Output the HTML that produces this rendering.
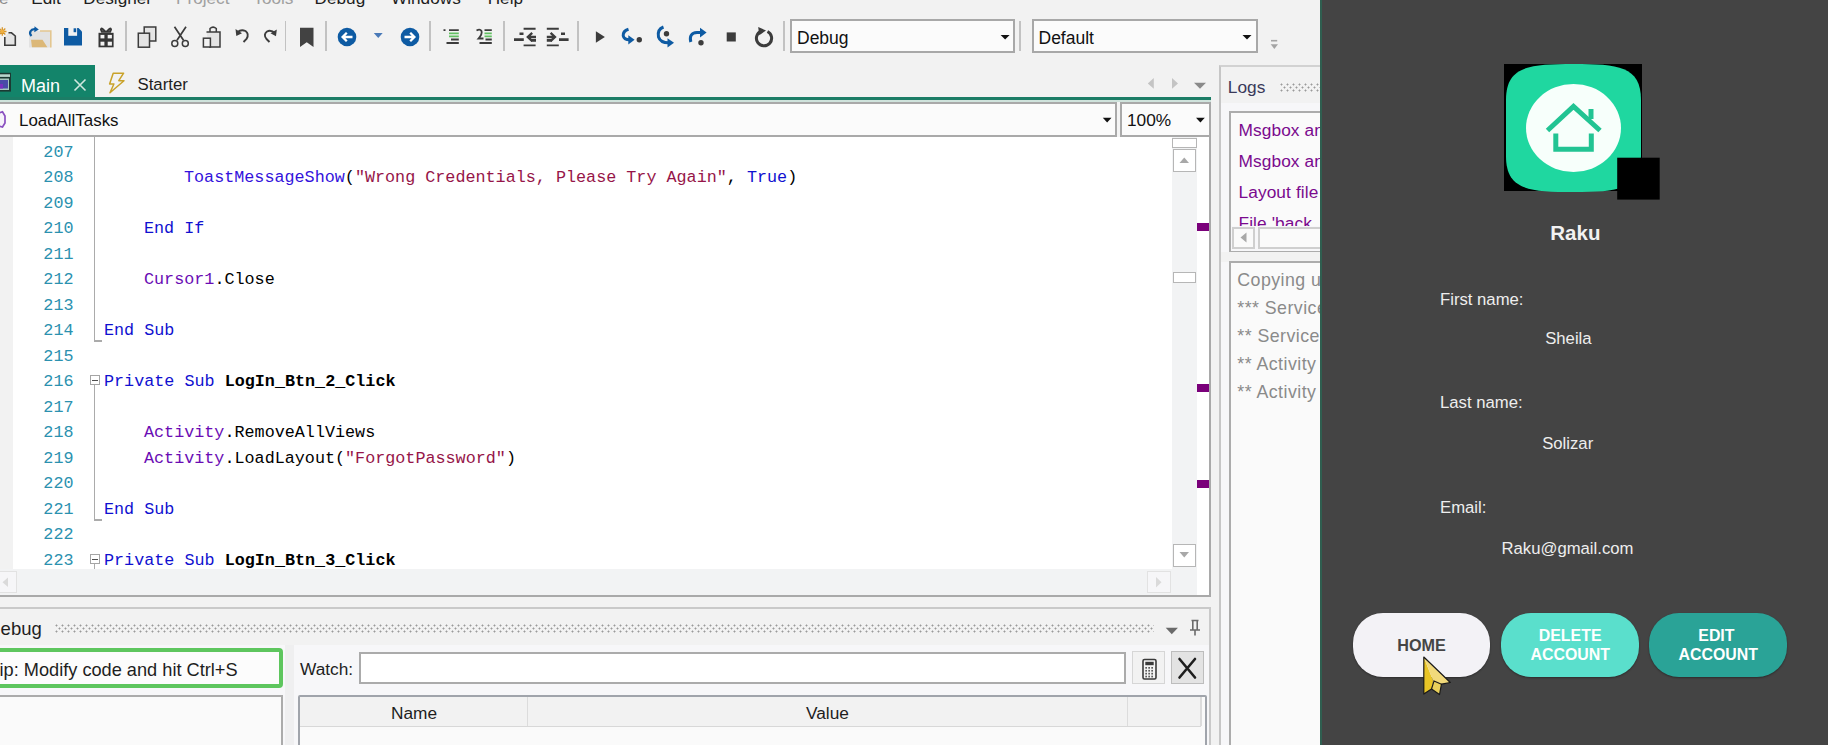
<!DOCTYPE html>
<html><head><meta charset="utf-8"><style>
html,body{margin:0;padding:0;}
body{width:1828px;height:745px;overflow:hidden;position:relative;background:#f2f2f2;font-family:"Liberation Sans", sans-serif;}
div{box-sizing:border-box;}
svg{position:absolute;left:0;top:0;overflow:visible}
</style></head><body>

<div style="position:absolute;left:-1.00px;top:-10.00px;font-family:'Liberation Sans', sans-serif;font-size:17.2px;line-height:1;white-space:pre;color:#8a8a8a;font-weight:normal;">e</div>
<div style="position:absolute;left:31.20px;top:-10.00px;font-family:'Liberation Sans', sans-serif;font-size:17.2px;line-height:1;white-space:pre;color:#1e1e1e;font-weight:normal;">Edit</div>
<div style="position:absolute;left:83.30px;top:-10.00px;font-family:'Liberation Sans', sans-serif;font-size:17.2px;line-height:1;white-space:pre;color:#1e1e1e;font-weight:normal;">Designer</div>
<div style="position:absolute;left:176.00px;top:-10.00px;font-family:'Liberation Sans', sans-serif;font-size:17.2px;line-height:1;white-space:pre;color:#a0a0a0;font-weight:normal;">Project</div>
<div style="position:absolute;left:253.30px;top:-10.00px;font-family:'Liberation Sans', sans-serif;font-size:17.2px;line-height:1;white-space:pre;color:#a0a0a0;font-weight:normal;">Tools</div>
<div style="position:absolute;left:314.60px;top:-10.00px;font-family:'Liberation Sans', sans-serif;font-size:17.2px;line-height:1;white-space:pre;color:#1e1e1e;font-weight:normal;">Debug</div>
<div style="position:absolute;left:391.00px;top:-10.00px;font-family:'Liberation Sans', sans-serif;font-size:17.2px;line-height:1;white-space:pre;color:#1e1e1e;font-weight:normal;">Windows</div>
<div style="position:absolute;left:487.70px;top:-10.00px;font-family:'Liberation Sans', sans-serif;font-size:17.2px;line-height:1;white-space:pre;color:#1e1e1e;font-weight:normal;">Help</div>
<div style="position:absolute;left:125.25px;top:21px;width:1.5px;height:30px;background:#c2c2c2"></div>
<div style="position:absolute;left:284.65px;top:21px;width:1.5px;height:30px;background:#c2c2c2"></div>
<div style="position:absolute;left:325.25px;top:21px;width:1.5px;height:30px;background:#c2c2c2"></div>
<div style="position:absolute;left:429.25px;top:21px;width:1.5px;height:30px;background:#c2c2c2"></div>
<div style="position:absolute;left:503.25px;top:21px;width:1.5px;height:30px;background:#c2c2c2"></div>
<div style="position:absolute;left:577.25px;top:21px;width:1.5px;height:30px;background:#c2c2c2"></div>
<div style="position:absolute;left:783.05px;top:21px;width:1.5px;height:30px;background:#c2c2c2"></div>
<div style="position:absolute;left:1019.25px;top:21px;width:1.5px;height:30px;background:#c2c2c2"></div>
<div style="position:absolute;left:790px;top:19px;width:225px;height:34px;background:#fbfbfb;border:2px solid #a8a8a8"></div>
<div style="position:absolute;left:797.00px;top:29.53px;font-family:'Liberation Sans', sans-serif;font-size:17.5px;line-height:1;white-space:pre;color:#111;font-weight:normal;">Debug</div>
<div style="position:absolute;left:1032px;top:19px;width:226px;height:34px;background:#fbfbfb;border:2px solid #a8a8a8"></div>
<div style="position:absolute;left:1038.50px;top:29.83px;font-family:'Liberation Sans', sans-serif;font-size:17.5px;line-height:1;white-space:pre;color:#111;font-weight:normal;">Default</div>
<div style="position:absolute;left:0px;top:65px;width:95px;height:33px;background:#13846a"></div>
<div style="position:absolute;left:0px;top:97px;width:1211px;height:3px;background:#1c7d66"></div>
<div style="position:absolute;left:0px;top:100px;width:1211px;height:1.5px;background:#cfe3dc"></div>
<div style="position:absolute;left:21.00px;top:76.55px;font-family:'Liberation Sans', sans-serif;font-size:18px;line-height:1;white-space:pre;color:#ffffff;font-weight:normal;">Main</div>
<div style="position:absolute;left:137.50px;top:77.14px;font-family:'Liberation Sans', sans-serif;font-size:16.8px;line-height:1;white-space:pre;color:#1e1e1e;font-weight:normal;">Starter</div>
<div style="position:absolute;left:-2px;top:101.5px;width:1119px;height:35px;background:#fbfbfb;border:2px solid #a9a9a9"></div>
<div style="position:absolute;left:1117px;top:101.5px;width:3px;height:35px;background:#f4f4f4"></div>
<div style="position:absolute;left:1120px;top:101.5px;width:91px;height:35px;background:#fbfbfb;border:2px solid #a9a9a9"></div>
<div style="position:absolute;left:19.00px;top:112.52px;font-family:'Liberation Sans', sans-serif;font-size:16.9px;line-height:1;white-space:pre;color:#111;font-weight:normal;">LoadAllTasks</div>
<div style="position:absolute;left:1127.00px;top:112.36px;font-family:'Liberation Sans', sans-serif;font-size:17.3px;line-height:1;white-space:pre;color:#111;font-weight:normal;">100%</div>
<svg width="1828" height="745" style="position:absolute;left:0;top:0"><path d="M4.8 37 V45.3 H15.3 V36 L11.5 32.8 H8.5" stroke="#3c3c3c" stroke-width="1.6" fill="#e4e4e4" stroke-linejoin="miter"/><g stroke="#d8962a" stroke-width="1.3"><path d="M2.3 27.3 V35.7 M-1.9 31.5 H6.5 M-0.7 28.5 L5.3 34.5 M5.3 28.5 L-0.7 34.5"/></g><circle cx="2.3" cy="31.5" r="1.8" fill="#f0b040"/><path d="M29 31 H50.8 V47.5 H29 Z" fill="#e2e2e2"/><path d="M40 31 H50.8 V47.5" stroke="#e3c690" stroke-width="1.6" fill="none"/><path d="M31 39.7 H42.5 L47.4 47.2 H32 Z" fill="#dcb878"/><path d="M31.5 36 C28.5 33 30.5 28.5 35.5 29.2" stroke="#0e5ba3" stroke-width="2.2" fill="none"/><path d="M34.5 26.3 L38.8 29.4 L34.3 32.2 Z" fill="#0e5ba3"/><path d="M64 27.9 H78.5 L82 31.4 V45.6 H64 Z" fill="#0e5ba3"/><rect x="68.3" y="27.9" width="8.8" height="7.9" fill="#f2f2f2"/><rect x="73.6" y="28.3" width="2.6" height="3.9" fill="#0e5ba3"/><rect x="98.5" y="32.8" width="15.1" height="14.5" fill="#363636"/><g fill="#f2f2f2"><rect x="100.5" y="34.9" width="3.9" height="3.5"/><rect x="107.7" y="34.9" width="4.2" height="3.5"/><rect x="100.5" y="41.7" width="3.9" height="3.9"/><rect x="107.7" y="41.7" width="4.2" height="3.9"/></g><path d="M106 32 L102.5 28.6 Q101 27.8 100.8 29.6 L101.8 32 Z M106 32 L109.5 28.6 Q111 27.8 111.2 29.6 L110.2 32 Z" stroke="#363636" stroke-width="1.6" fill="#5a5a5a"/><rect x="144.2" y="27" width="11.6" height="14" fill="#e4e4e4" stroke="#3c3c3c" stroke-width="1.5"/><rect x="138.3" y="33.2" width="11.2" height="14" fill="#e4e4e4" stroke="#3c3c3c" stroke-width="1.5"/><path d="M174.5 26.8 L183.5 40.3 M186 26.8 L177 40.3" stroke="#3c3c3c" stroke-width="1.7" fill="none"/><circle cx="174.8" cy="43.5" r="3" stroke="#3c3c3c" stroke-width="1.5" fill="#f2f2f2"/><circle cx="185.3" cy="43.5" r="3" stroke="#3c3c3c" stroke-width="1.5" fill="#f2f2f2"/><path d="M206.5 32 H220 V47 H209" stroke="#3c3c3c" stroke-width="1.5" fill="#e4e4e4"/><path d="M210 32 V28.5 Q213 25.8 216.3 28.5 V32" stroke="#3c3c3c" stroke-width="1.5" fill="none"/><rect x="203.4" y="38.2" width="7" height="8.8" fill="#f2f2f2" stroke="#3c3c3c" stroke-width="1.5"/><path d="M237.5 32.2 Q241 29 245.5 31 Q249.5 34 246.5 39 L243.5 42" stroke="#3c3c3c" stroke-width="1.9" fill="none"/><path d="M235.5 29 L236.3 36 L242 33.2 Z" fill="#3c3c3c"/><path d="M275.5 33.5 Q271 29.5 267 31.5 Q263 34.5 266.5 39 L269.5 42" stroke="#3c3c3c" stroke-width="1.9" fill="none"/><path d="M276.8 29.5 L276 36.2 L270.5 33.2 Z" fill="#3c3c3c"/><path d="M300 27.7 H313.5 V47 L306.75 42.3 L300 47 Z" fill="#424242"/><circle cx="347" cy="37" r="9.3" fill="#0e5ba3"/><path d="M352.5 37 H343 M346.8 32.8 L342.6 37 L346.8 41.2" stroke="#fff" stroke-width="2.3" fill="none"/><polygon points="373.8,33 382.7,33 378.25,38.1" fill="#4a7ab8"/><circle cx="410" cy="37" r="9.3" fill="#0e5ba3"/><path d="M404.5 37 H414 M410.2 32.8 L414.4 37 L410.2 41.2" stroke="#fff" stroke-width="2.3" fill="none"/><g stroke-width="1.8"><path d="M443.5 30.2 H445.5 M449 30.2 H458.8" stroke="#3c3c3c"/><path d="M449 33.3 H458.8 M449 36.4 H458.8" stroke="#62c062"/><path d="M451 39.5 H458.8 M446.5 43 H458.8" stroke="#3c3c3c"/></g><g stroke-width="1.8"><path d="M484.5 30.2 H491.8 M485.5 39.5 H491.8 M479.5 43 H491.8" stroke="#3c3c3c"/><path d="M484.5 33.3 H491.8 M484.5 36.4 H491.8" stroke="#62c062"/></g><path d="M476.5 30.5 Q480 28.5 481.5 31 Q482.5 34 478.5 38.5 H483.5" stroke="#3c3c3c" stroke-width="1.8" fill="none"/><g stroke="#3c3c3c" stroke-width="1.9"><path d="M523.6 28.8 H535.6 M523.6 45.4 H535.6"/></g><g stroke="#3c3c3c" stroke-width="2.6"><path d="M514 39.6 H523.8 M519.5 33.8 H523.5 M531 40.4 H536"/></g><path d="M536 37 H529 M532.2 32.8 L527.8 37 L532.2 41.2" stroke="#3c3c3c" stroke-width="2.3" fill="none"/><g stroke="#3c3c3c" stroke-width="1.9"><path d="M546.8 28.8 H558.8 M546.8 45.4 H558.8"/></g><g stroke="#3c3c3c" stroke-width="2.6"><path d="M559 39.6 H568.6 M561 33.8 H565 M546.8 40.4 H551.8"/></g><path d="M546.8 37 H554 M550.6 32.8 L555 37 L550.6 41.2" stroke="#3c3c3c" stroke-width="2.3" fill="none"/><polygon points="595.9,31.3 595.9,42.8 604.9,37" fill="#3c3c3c"/><path d="M628.5 29.2 Q622.8 31 623.2 35.8 Q624 39.8 629.5 39.8" stroke="#0e5ba3" stroke-width="3" fill="none"/><polygon points="628.3,35.2 634.6,39.8 628.3,44.4" fill="#0e5ba3"/><circle cx="639.3" cy="39.8" r="2.7" fill="#3c3c3c"/><path d="M663.5 27 Q657 29.5 658.5 37 Q660.5 42.8 668.5 42.8" stroke="#0e5ba3" stroke-width="3" fill="none"/><polygon points="667.5,38.2 674,42.8 667.5,47.4" fill="#0e5ba3"/><circle cx="666.5" cy="33.8" r="2.7" fill="#3c3c3c"/><path d="M690.8 42 Q688.5 33.2 697 32.6 L701 32.6" stroke="#0e5ba3" stroke-width="3" fill="none"/><polygon points="700,27.8 706.6,32.6 700,37.4" fill="#0e5ba3"/><circle cx="701" cy="42.8" r="2.7" fill="#3c3c3c"/><rect x="726.7" y="32.4" width="9.1" height="9.1" fill="#3c3c3c"/><path d="M761.2 31.2 A7.6 7.6 0 1 0 767.5 31.5" stroke="#3c3c3c" stroke-width="3" fill="none"/><polygon points="758.2,27 766,30.5 759.2,35.2" fill="#3c3c3c"/><polygon points="1000.6,35 1009.6,35 1005.1,39.6" fill="#111"/><polygon points="1242.5,35 1251.5,35 1247,39.6" fill="#111"/><g fill="#a4a4a4"><rect x="1271" y="39.9" width="6.2" height="1.6"/><polygon points="1270.7,44.2 1278,44.2 1274.35,49"/></g><rect x="-4" y="72.8" width="15" height="18.8" fill="#1c3a33"/><rect x="-2" y="74.3" width="12" height="2.6" fill="#b8d6cc"/><rect x="-2" y="78.5" width="11" height="11.5" fill="#a8c8c0"/><rect x="-1" y="80" width="9" height="8.5" fill="#4a4aa8"/><rect x="-1" y="84" width="4" height="4.5" fill="#7a30c0"/><path d="M74.5 79.5 L85.5 90.5 M85.5 79.5 L74.5 90.5" stroke="#cfe7de" stroke-width="1.6"/><polygon points="113.2,73.2 123.6,73.2 118.8,80.7 124,80.7 110,92.8 113.9,84 109.6,84" stroke="#c9a22a" stroke-width="1.5" fill="none" stroke-linejoin="round"/><polygon points="1153.8,78 1153.8,88.8 1147.8,83.4" fill="#c4c4c4"/><polygon points="1172,78 1172,88.8 1178,83.4" fill="#c4c4c4"/><polygon points="1194,82.8 1206,82.8 1200,88.8" fill="#8a8a8a"/><polygon points="1102.8,117.7 1111.5,117.7 1107.15,122.4" fill="#111"/><polygon points="1196,117.7 1204.8,117.7 1200.4,122.4" fill="#111"/><path d="M-1 113 L2.5 111.8 L5 116 L5 123 L2.5 127 L-1 126" stroke="#8a50c0" stroke-width="1.7" fill="#f6f2fa"/></svg>
<div style="position:absolute;left:0px;top:136.5px;width:1211px;height:460.5px;background:#ffffff;border-right:2px solid #a9a9a9;border-bottom:2px solid #a9a9a9"></div>
<div style="position:absolute;left:0px;top:136.5px;width:13px;height:432.5px;background:#f2f2f2"></div>
<div style="position:absolute;left:1171.6px;top:136.5px;width:25.2px;height:432.5px;background:#f2f3f4"></div>
<div style="position:absolute;left:0px;top:569px;width:1197px;height:26px;background:#f2f3f4"></div>
<div style="position:absolute;left:0px;width:73.5px;text-align:right;top:144.70px;font-family:'Liberation Mono', monospace;font-size:16.75px;line-height:1;white-space:pre;color:#2b91af">207</div>
<div style="position:absolute;left:0px;width:73.5px;text-align:right;top:170.20px;font-family:'Liberation Mono', monospace;font-size:16.75px;line-height:1;white-space:pre;color:#2b91af">208</div>
<div style="position:absolute;left:184px;top:170.20px;font-family:'Liberation Mono', monospace;font-size:16.75px;line-height:1;white-space:pre"><span style="color:#3312dc;">ToastMessageShow</span><span style="color:#000000;">(</span><span style="color:#961549;">&quot;Wrong Credentials, Please Try Again&quot;</span><span style="color:#000000;">, </span><span style="color:#1010d0;">True</span><span style="color:#000000;">)</span></div>
<div style="position:absolute;left:0px;width:73.5px;text-align:right;top:195.70px;font-family:'Liberation Mono', monospace;font-size:16.75px;line-height:1;white-space:pre;color:#2b91af">209</div>
<div style="position:absolute;left:0px;width:73.5px;text-align:right;top:221.20px;font-family:'Liberation Mono', monospace;font-size:16.75px;line-height:1;white-space:pre;color:#2b91af">210</div>
<div style="position:absolute;left:144px;top:221.20px;font-family:'Liberation Mono', monospace;font-size:16.75px;line-height:1;white-space:pre"><span style="color:#1010d0;">End If</span></div>
<div style="position:absolute;left:0px;width:73.5px;text-align:right;top:246.70px;font-family:'Liberation Mono', monospace;font-size:16.75px;line-height:1;white-space:pre;color:#2b91af">211</div>
<div style="position:absolute;left:0px;width:73.5px;text-align:right;top:272.20px;font-family:'Liberation Mono', monospace;font-size:16.75px;line-height:1;white-space:pre;color:#2b91af">212</div>
<div style="position:absolute;left:144px;top:272.20px;font-family:'Liberation Mono', monospace;font-size:16.75px;line-height:1;white-space:pre"><span style="color:#6a0cb4;">Cursor1</span><span style="color:#000000;">.Close</span></div>
<div style="position:absolute;left:0px;width:73.5px;text-align:right;top:297.70px;font-family:'Liberation Mono', monospace;font-size:16.75px;line-height:1;white-space:pre;color:#2b91af">213</div>
<div style="position:absolute;left:0px;width:73.5px;text-align:right;top:323.20px;font-family:'Liberation Mono', monospace;font-size:16.75px;line-height:1;white-space:pre;color:#2b91af">214</div>
<div style="position:absolute;left:104px;top:323.20px;font-family:'Liberation Mono', monospace;font-size:16.75px;line-height:1;white-space:pre"><span style="color:#1010d0;">End Sub</span></div>
<div style="position:absolute;left:0px;width:73.5px;text-align:right;top:348.70px;font-family:'Liberation Mono', monospace;font-size:16.75px;line-height:1;white-space:pre;color:#2b91af">215</div>
<div style="position:absolute;left:0px;width:73.5px;text-align:right;top:374.20px;font-family:'Liberation Mono', monospace;font-size:16.75px;line-height:1;white-space:pre;color:#2b91af">216</div>
<div style="position:absolute;left:104px;top:374.20px;font-family:'Liberation Mono', monospace;font-size:16.75px;line-height:1;white-space:pre"><span style="color:#1010d0;">Private Sub </span><span style="color:#000000;font-weight:bold;">LogIn_Btn_2_Click</span></div>
<div style="position:absolute;left:0px;width:73.5px;text-align:right;top:399.70px;font-family:'Liberation Mono', monospace;font-size:16.75px;line-height:1;white-space:pre;color:#2b91af">217</div>
<div style="position:absolute;left:0px;width:73.5px;text-align:right;top:425.20px;font-family:'Liberation Mono', monospace;font-size:16.75px;line-height:1;white-space:pre;color:#2b91af">218</div>
<div style="position:absolute;left:144px;top:425.20px;font-family:'Liberation Mono', monospace;font-size:16.75px;line-height:1;white-space:pre"><span style="color:#6a0cb4;">Activity</span><span style="color:#000000;">.RemoveAllViews</span></div>
<div style="position:absolute;left:0px;width:73.5px;text-align:right;top:450.70px;font-family:'Liberation Mono', monospace;font-size:16.75px;line-height:1;white-space:pre;color:#2b91af">219</div>
<div style="position:absolute;left:144px;top:450.70px;font-family:'Liberation Mono', monospace;font-size:16.75px;line-height:1;white-space:pre"><span style="color:#6a0cb4;">Activity</span><span style="color:#000000;">.LoadLayout(</span><span style="color:#961549;">&quot;ForgotPassword&quot;</span><span style="color:#000000;">)</span></div>
<div style="position:absolute;left:0px;width:73.5px;text-align:right;top:476.20px;font-family:'Liberation Mono', monospace;font-size:16.75px;line-height:1;white-space:pre;color:#2b91af">220</div>
<div style="position:absolute;left:0px;width:73.5px;text-align:right;top:501.70px;font-family:'Liberation Mono', monospace;font-size:16.75px;line-height:1;white-space:pre;color:#2b91af">221</div>
<div style="position:absolute;left:104px;top:501.70px;font-family:'Liberation Mono', monospace;font-size:16.75px;line-height:1;white-space:pre"><span style="color:#1010d0;">End Sub</span></div>
<div style="position:absolute;left:0px;width:73.5px;text-align:right;top:527.20px;font-family:'Liberation Mono', monospace;font-size:16.75px;line-height:1;white-space:pre;color:#2b91af">222</div>
<div style="position:absolute;left:0px;width:73.5px;text-align:right;top:552.70px;font-family:'Liberation Mono', monospace;font-size:16.75px;line-height:1;white-space:pre;color:#2b91af">223</div>
<div style="position:absolute;left:104px;top:552.70px;font-family:'Liberation Mono', monospace;font-size:16.75px;line-height:1;white-space:pre"><span style="color:#1010d0;">Private Sub </span><span style="color:#000000;font-weight:bold;">LogIn_Btn_3_Click</span></div>
<div style="position:absolute;left:94.2px;top:137px;width:1.2px;height:204px;background:#ababab"></div>
<div style="position:absolute;left:94px;top:340px;width:8px;height:1.5px;background:#ababab"></div>
<div style="position:absolute;left:89.7px;top:375px;width:10.3px;height:10.3px;border:1.5px solid #a5a5a5;background:#fff"></div>
<div style="position:absolute;left:92px;top:379.5px;width:6px;height:1.5px;background:#505050"></div>
<div style="position:absolute;left:94.2px;top:385px;width:1.2px;height:135px;background:#ababab"></div>
<div style="position:absolute;left:94px;top:519px;width:8px;height:1.5px;background:#ababab"></div>
<div style="position:absolute;left:89.7px;top:554px;width:10.3px;height:10.3px;border:1.5px solid #a5a5a5;background:#fff"></div>
<div style="position:absolute;left:92px;top:558.5px;width:6px;height:1.5px;background:#505050"></div>
<div style="position:absolute;left:94.2px;top:564px;width:1.2px;height:5px;background:#ababab"></div>
<div style="position:absolute;left:1171.6px;top:138.4px;width:25.2px;height:9.6px;background:#fff;border:1.6px solid #b6b6b6"></div>
<div style="position:absolute;left:1173px;top:148.7px;width:22.6px;height:23px;background:#fff;border:1.6px solid #b6b6b6"></div>
<div style="position:absolute;left:1173px;top:271.7px;width:22.6px;height:11.5px;background:#fff;border:1.6px solid #b6b6b6"></div>
<div style="position:absolute;left:1173px;top:544.4px;width:22.6px;height:23px;background:#fff;border:1.6px solid #b6b6b6"></div>
<div style="position:absolute;left:1197px;top:222.7px;width:12px;height:8px;background:#7a007a"></div>
<div style="position:absolute;left:1197px;top:384px;width:12px;height:8px;background:#7a007a"></div>
<div style="position:absolute;left:1197px;top:480px;width:12px;height:8px;background:#7a007a"></div>
<div style="position:absolute;left:-2px;top:571.3px;width:19px;height:22px;background:#f6f6f8;border:1.5px solid #e2e2e2"></div>
<div style="position:absolute;left:1147.4px;top:571px;width:23.2px;height:22.3px;background:#f6f6f8;border:1.5px solid #e2e2e2"></div>
<svg width="1828" height="745" style="position:absolute;left:0;top:0"><polygon points="1179.5,163 1189,163 1184.25,157.5" fill="#a8a8a8"/><polygon points="1179.5,552 1189,552 1184.25,557.5" fill="#a8a8a8"/><polygon points="1156,577 1156,587.5 1161.5,582.25" fill="#dadada"/><polygon points="8,577.5 8,587 2.5,582.25" fill="#dadada"/></svg>
<div style="position:absolute;left:0px;top:607px;width:1211px;height:2px;background:#c9c9c9"></div>
<div style="position:absolute;left:0px;top:609px;width:1211px;height:136px;background:#f7f7f9;border-right:2px solid #c9c9c9"></div>
<div style="position:absolute;left:0px;top:609px;width:1209px;height:36px;background:#f2f2f2"></div>
<div style="position:absolute;left:0.60px;top:620.37px;font-family:'Liberation Sans', sans-serif;font-size:18.5px;line-height:1;white-space:pre;color:#1e1e1e;font-weight:normal;">ebug</div>
<div style="position:absolute;left:55px;top:624px;width:1099px;height:9px;background-image:radial-gradient(circle at 1.5px 1.5px,#9a9a9a 0.8px,transparent 1.2px),radial-gradient(circle at 4.5px 4.5px,#9a9a9a 0.8px,transparent 1.2px);background-size:6px 6px"></div>
<svg width="1828" height="745" style="position:absolute;left:0;top:0"><polygon points="1165.7,627.8 1177.9,627.8 1171.8,634.2" fill="#6a6a6a"/><path d="M1191.5 620.5 H1198.5 M1192.8 620.5 V630 M1197.2 620.5 V630 M1190 630 H1200 M1195 630 V635.5" stroke="#6a6a6a" stroke-width="1.6" fill="none"/></svg>
<div style="position:absolute;left:-6px;top:648.3px;width:289px;height:39.5px;background:#fcfcfc;border:4px solid #5ec65e;border-radius:4px"></div>
<div style="position:absolute;left:-0.50px;top:660.72px;font-family:'Liberation Sans', sans-serif;font-size:18.2px;line-height:1;white-space:pre;color:#1e1e1e;font-weight:normal;">ip: Modify code and hit Ctrl+S</div>
<div style="position:absolute;left:-4px;top:694.6px;width:287px;height:60px;background:#fafafa;border:2px solid #ababab"></div>
<div style="position:absolute;left:285.4px;top:645px;width:8.5px;height:100px;background:#efeff0"></div>
<div style="position:absolute;left:300.00px;top:661.16px;font-family:'Liberation Sans', sans-serif;font-size:17.3px;line-height:1;white-space:pre;color:#1e1e1e;font-weight:normal;">Watch:</div>
<div style="position:absolute;left:359.4px;top:651.7px;width:766.3px;height:32.6px;background:#fff;border:2px solid #ababab"></div>
<div style="position:absolute;left:1132.3px;top:651.2px;width:32.3px;height:33.3px;background:#f2f2f2;border:1px solid #d6d6d6"></div>
<div style="position:absolute;left:1170.9px;top:651.2px;width:32.8px;height:33.3px;background:#e3e3e3;border:1px solid #bdbdbd"></div>
<svg width="1828" height="745" style="position:absolute;left:0;top:0"><rect x="1143" y="659.5" width="13" height="19.5" rx="1.5" fill="#f4f4f4" stroke="#3a3a3a" stroke-width="1.6"/><rect x="1145.3" y="661.8" width="8.4" height="3.4" fill="#3a3a3a"/><g fill="#5a5a5a"><rect x="1145.3" y="667.0" width="1.7" height="1.7"/><rect x="1148.3" y="667.0" width="1.7" height="1.7"/><rect x="1151.3" y="667.0" width="1.7" height="1.7"/><rect x="1145.3" y="669.9" width="1.7" height="1.7"/><rect x="1148.3" y="669.9" width="1.7" height="1.7"/><rect x="1151.3" y="669.9" width="1.7" height="1.7"/><rect x="1145.3" y="672.8" width="1.7" height="1.7"/><rect x="1148.3" y="672.8" width="1.7" height="1.7"/><rect x="1151.3" y="672.8" width="1.7" height="1.7"/><rect x="1145.3" y="675.7" width="1.7" height="1.7"/><rect x="1148.3" y="675.7" width="1.7" height="1.7"/><rect x="1151.3" y="675.7" width="1.7" height="1.7"/></g><path d="M1179.5 659 L1195 677.5 M1195 659 L1179.5 677.5" stroke="#1e1e1e" stroke-width="2.6" fill="none" stroke-linecap="round"/></svg>
<div style="position:absolute;left:297.9px;top:694.6px;width:909.1px;height:60px;background:#fafafa;border:2px solid #a0a4ab;border-radius:2px"></div>
<div style="position:absolute;left:300px;top:697px;width:900.6px;height:29.5px;background:#f2f2f2;border-bottom:1.5px solid #d8d8d8"></div>
<div style="position:absolute;left:526.5px;top:697px;width:1.5px;height:29px;background:#dcdcdc"></div>
<div style="position:absolute;left:1126.5px;top:697px;width:1.5px;height:29px;background:#dcdcdc"></div>
<div style="position:absolute;left:1200px;top:697px;width:1.5px;height:29px;background:#dcdcdc"></div>
<div style="position:absolute;left:391.00px;top:704.56px;font-family:'Liberation Sans', sans-serif;font-size:17.3px;line-height:1;white-space:pre;color:#1e1e1e;font-weight:normal;">Name</div>
<div style="position:absolute;left:806.00px;top:704.56px;font-family:'Liberation Sans', sans-serif;font-size:17.3px;line-height:1;white-space:pre;color:#1e1e1e;font-weight:normal;">Value</div>
<div style="position:absolute;left:1219px;top:65px;width:101px;height:680px;background:#f7f7f9;border-left:2px solid #c6c6c6;border-top:2px solid #d2d2d2"></div>
<div style="position:absolute;left:1221px;top:67px;width:99px;height:36px;background:#f2f2f2"></div>
<div style="position:absolute;left:1227.80px;top:78.56px;font-family:'Liberation Sans', sans-serif;font-size:17.3px;line-height:1;white-space:pre;color:#3a3a5a;font-weight:normal;">Logs</div>
<div style="position:absolute;left:1279.5px;top:83px;width:41px;height:9px;background-image:radial-gradient(circle at 1.5px 1.5px,#9a9a9a 0.8px,transparent 1.2px),radial-gradient(circle at 4.5px 4.5px,#9a9a9a 0.8px,transparent 1.2px);background-size:6px 6px"></div>
<div style="position:absolute;left:1229.2px;top:111.2px;width:100px;height:141px;background:#fafafa;border:2px solid #acacac"></div>
<div style="position:absolute;left:1238.50px;top:121.56px;font-family:'Liberation Sans', sans-serif;font-size:17.3px;line-height:1;white-space:pre;color:#7a0a8e;font-weight:normal;letter-spacing:0.1px">Msgbox and</div>
<div style="position:absolute;left:1238.50px;top:152.56px;font-family:'Liberation Sans', sans-serif;font-size:17.3px;line-height:1;white-space:pre;color:#7a0a8e;font-weight:normal;letter-spacing:0.1px">Msgbox and</div>
<div style="position:absolute;left:1238.50px;top:183.56px;font-family:'Liberation Sans', sans-serif;font-size:17.3px;line-height:1;white-space:pre;color:#7a0a8e;font-weight:normal;letter-spacing:0.1px">Layout file</div>
<div style="position:absolute;left:1238.50px;top:214.56px;font-family:'Liberation Sans', sans-serif;font-size:17.3px;line-height:1;white-space:pre;color:#7a0a8e;font-weight:normal;letter-spacing:0.1px">File 'back...</div>
<div style="position:absolute;left:1231.2px;top:225.5px;width:90px;height:25.5px;background:#f7f7f9"></div>
<div style="position:absolute;left:1231.8px;top:226.5px;width:23.7px;height:22.2px;background:#fafafa;border:2px solid #cfcfcf"></div>
<div style="position:absolute;left:1257.8px;top:226.5px;width:70px;height:22.2px;background:#fafafa;border:2px solid #cfcfcf"></div>
<svg width="1828" height="745" style="position:absolute;left:0;top:0"><polygon points="1246.5,232.5 1246.5,242.5 1240.5,237.5" fill="#a8a8a8"/></svg>
<div style="position:absolute;left:1221px;top:252px;width:99px;height:9.5px;background:#f2f2f2"></div>
<div style="position:absolute;left:1229.2px;top:261.4px;width:100px;height:500px;background:#fafafa;border:2px solid #acacac"></div>
<div style="position:absolute;left:1237.30px;top:272.28px;font-family:'Liberation Sans', sans-serif;font-size:17.8px;line-height:1;white-space:pre;color:#8a8a8a;font-weight:normal;letter-spacing:0.45px">Copying upd</div>
<div style="position:absolute;left:1237.30px;top:300.28px;font-family:'Liberation Sans', sans-serif;font-size:17.8px;line-height:1;white-space:pre;color:#8a8a8a;font-weight:normal;letter-spacing:0.45px">*** Service</div>
<div style="position:absolute;left:1237.30px;top:328.28px;font-family:'Liberation Sans', sans-serif;font-size:17.8px;line-height:1;white-space:pre;color:#8a8a8a;font-weight:normal;letter-spacing:0.45px">** Service (</div>
<div style="position:absolute;left:1237.30px;top:356.28px;font-family:'Liberation Sans', sans-serif;font-size:17.8px;line-height:1;white-space:pre;color:#8a8a8a;font-weight:normal;letter-spacing:0.45px">** Activity</div>
<div style="position:absolute;left:1237.30px;top:384.28px;font-family:'Liberation Sans', sans-serif;font-size:17.8px;line-height:1;white-space:pre;color:#8a8a8a;font-weight:normal;letter-spacing:0.45px">** Activity</div>
<div style="position:absolute;left:1319.5px;top:0px;width:0.8px;height:745px;background:#e8f8f4"></div>
<div style="position:absolute;left:1320.2px;top:0px;width:2px;height:745px;background:#2f5f50"></div>
<div style="position:absolute;left:1322px;top:0px;width:506px;height:745px;background:#444444"></div>
<svg width="1828" height="745" style="position:absolute;left:0;top:0"><rect x="1504" y="64" width="138" height="127" fill="#000"/><path d="M1573.5 64 C1618 64 1641 66 1641 100 L1641 156 C1641 190 1618 192 1573.5 192 C1529 192 1506 190 1506 156 L1506 100 C1506 66 1529 64 1573.5 64 Z" fill="#1fd7a0"/><ellipse cx="1573.5" cy="128" rx="47.5" ry="44" fill="#f7fffb"/><path d="M1547.5 130.5 L1573.5 106.5 L1600 130.5" stroke="#22c493" stroke-width="5" fill="none"/><path d="M1591 119 V109" stroke="#22c493" stroke-width="5" fill="none"/><path d="M1555.8 133.5 V149.2 H1591.3 V133.5" stroke="#22c493" stroke-width="5" fill="none"/><rect x="1617.2" y="157.7" width="42.5" height="41.9" fill="#000"/></svg>
<div style="position:absolute;left:1550.30px;top:223.15px;font-family:'Liberation Sans', sans-serif;font-size:20.5px;line-height:1;white-space:pre;color:#f2f2f2;font-weight:bold;">Raku</div>
<div style="position:absolute;left:1440.00px;top:292.15px;font-family:'Liberation Sans', sans-serif;font-size:16.7px;line-height:1;white-space:pre;color:#eeeeee;font-weight:normal;">First name:</div>
<div style="position:absolute;left:1545.20px;top:331.45px;font-family:'Liberation Sans', sans-serif;font-size:16.7px;line-height:1;white-space:pre;color:#eeeeee;font-weight:normal;">Sheila</div>
<div style="position:absolute;left:1440.00px;top:394.65px;font-family:'Liberation Sans', sans-serif;font-size:16.7px;line-height:1;white-space:pre;color:#eeeeee;font-weight:normal;">Last name:</div>
<div style="position:absolute;left:1542.20px;top:436.15px;font-family:'Liberation Sans', sans-serif;font-size:16.7px;line-height:1;white-space:pre;color:#eeeeee;font-weight:normal;">Solizar</div>
<div style="position:absolute;left:1440.00px;top:500.15px;font-family:'Liberation Sans', sans-serif;font-size:16.7px;line-height:1;white-space:pre;color:#eeeeee;font-weight:normal;">Email:</div>
<div style="position:absolute;left:1501.50px;top:541.15px;font-family:'Liberation Sans', sans-serif;font-size:16.7px;line-height:1;white-space:pre;color:#eeeeee;font-weight:normal;">Raku@gmail.com</div>
<div style="position:absolute;left:1352.8px;top:612.8px;width:137.2px;height:64px;border-radius:30px;background:#f3f2f6;box-shadow:0 1px 2px rgba(0,0,0,0.35)"></div>
<div style="position:absolute;left:1501px;top:612.8px;width:137.8px;height:64px;border-radius:30px;background:#5adfcc;box-shadow:0 1px 2px rgba(0,0,0,0.35)"></div>
<div style="position:absolute;left:1649.4px;top:612.8px;width:137.6px;height:64px;border-radius:30px;background:#2aa397;box-shadow:0 1px 2px rgba(0,0,0,0.35)"></div>
<div style="position:absolute;left:1397.20px;top:636.73px;font-family:'Liberation Sans', sans-serif;font-size:16.2px;line-height:1;white-space:pre;color:#454545;font-weight:bold;">HOME</div>
<div style="position:absolute;left:1538.80px;top:627.78px;font-family:'Liberation Sans', sans-serif;font-size:15.9px;line-height:1;white-space:pre;color:#ffffff;font-weight:bold;">DELETE</div>
<div style="position:absolute;left:1530.50px;top:647.28px;font-family:'Liberation Sans', sans-serif;font-size:15.9px;line-height:1;white-space:pre;color:#ffffff;font-weight:bold;">ACCOUNT</div>
<div style="position:absolute;left:1698.30px;top:627.78px;font-family:'Liberation Sans', sans-serif;font-size:15.9px;line-height:1;white-space:pre;color:#ffffff;font-weight:bold;">EDIT</div>
<div style="position:absolute;left:1678.50px;top:647.28px;font-family:'Liberation Sans', sans-serif;font-size:15.9px;line-height:1;white-space:pre;color:#ffffff;font-weight:bold;">ACCOUNT</div>
<svg width="1828" height="745" style="position:absolute;left:0;top:0"><polygon points="1423.8,657 1433,680.5 1431.5,689 1423.8,694" fill="#e9c526"/><polygon points="1423.8,657 1450.3,682.5 1441.5,684.2 1433,680.5" fill="#f1d97a"/><polygon points="1433,680.5 1441.5,684.2 1439.5,694.6 1431.5,689" fill="#e8cf5a"/><polygon points="1423.8,657 1450.3,682.5 1441.5,684.2 1439.5,694.6 1431.5,689 1423.8,694" fill="none" stroke="#1a1a1a" stroke-width="1.2" stroke-linejoin="round"/><path d="M1431.5 689 L1434 681 L1441.5 684.2" stroke="#1a1a1a" stroke-width="1.1" fill="none"/></svg>
</body></html>
